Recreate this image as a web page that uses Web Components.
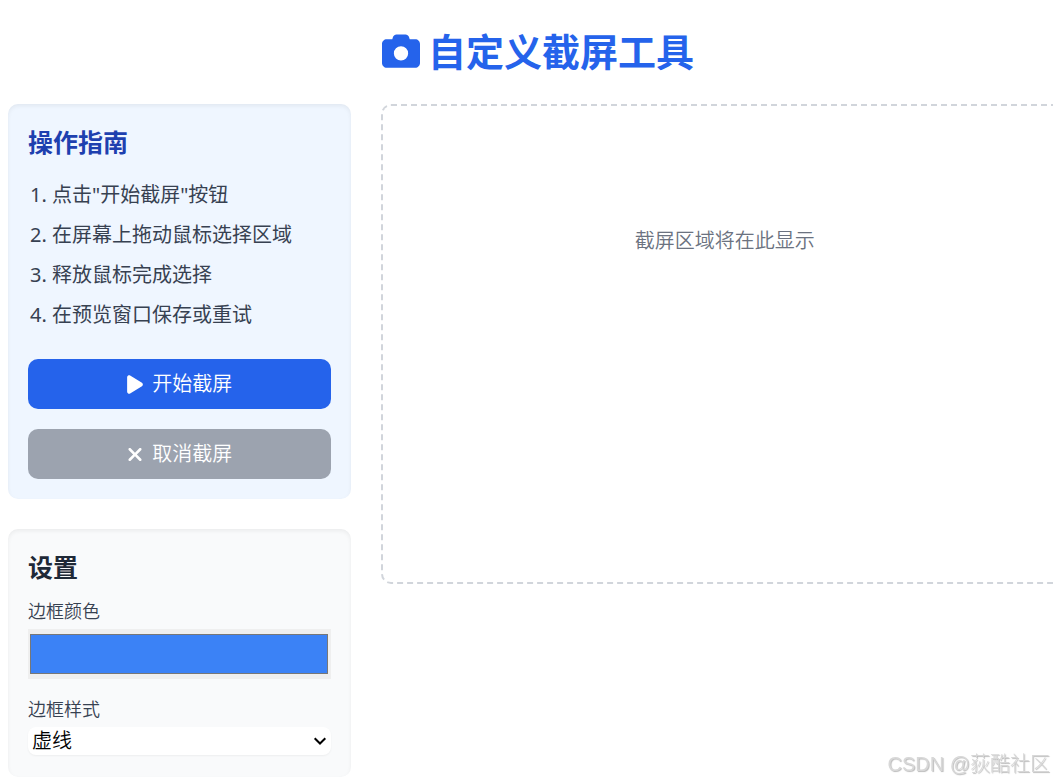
<!DOCTYPE html>
<html lang="zh-CN">
<head>
<meta charset="UTF-8">
<meta name="viewport" content="width=device-width, initial-scale=1">
<title>自定义截屏工具</title>
<style>
  body {
    margin: 0;
    padding: 8px;
    overflow-x: clip;
    background: #fff;
    color: #374151;
    font: 20px/30px "Noto Sans", "Noto Sans CJK SC", sans-serif;
    font-weight: 350;
  }
</style>
</head>
<body>
<capture-app>
  <tool-card slot="side" tone="blue">
    <span slot="title">操作指南</span>
    <step-list></step-list>
    <tool-button icon="play" tone="primary">开始截屏</tool-button>
    <tool-button icon="close">取消截屏</tool-button>
  </tool-card>
  <tool-card slot="side">
    <span slot="title">设置</span>
    <border-settings></border-settings>
  </tool-card>
  <capture-preview>截屏区域将在此显示</capture-preview>
</capture-app>
<water-mark>CSDN @荻酷社区</water-mark>

<script>
  function attach(el, html) {
    const template = document.createElement('template');
    template.innerHTML = html;
    el.attachShadow({mode: 'open'}).appendChild(template.content.cloneNode(true));
  }

  const icons = {
    play: 'M73 39c-14.8-9.1-33.4-9.4-48.5-.9S0 62.6 0 80V432c0 17.4 9.4 33.4 24.5 41.9s33.7 8.1 48.5-.9L361 297c14.3-8.7 23-24.2 23-41s-8.7-32.2-23-41L73 39z',
    close: 'M342.6 150.6c12.5-12.5 12.5-32.8 0-45.3s-32.8-12.5-45.3 0L192 210.7 86.6 105.4c-12.5-12.5-32.8-12.5-45.3 0s-12.5 32.8 0 45.3L146.7 256 41.4 361.4c-12.5 12.5-12.5 32.8 0 45.3s32.8 12.5 45.3 0L192 301.3 297.4 406.6c12.5 12.5 32.8 12.5 45.3 0s12.5-32.8 0-45.3L237.3 256 342.6 150.6z'
  };

  // page: title, side column, preview area (runs past the right edge)
  class CaptureApp extends HTMLElement {
    constructor() {
      super();
      attach(this, `
        <style>
          :host { display: block; margin-right: -23px }
          h1 {
            display: flex; justify-content: center; align-items: center; gap: 8px;
            margin: 15px 0 25px; color: #2563eb; font-size: 38px; line-height: 56px; font-weight: 700;
          }
          h1 svg { width: 38px; height: 38px; fill: currentColor }
          main { display: grid; grid-template-columns: 1fr 2fr; gap: 30px; align-items: start }
          aside { display: grid; gap: 30px }
        </style>
        <h1>
          <svg viewBox="0 0 512 512" aria-hidden="true"><path d="M149.1 64.8L138.7 96H64C28.7 96 0 124.7 0 160V416c0 35.3 28.7 64 64 64H448c35.3 0 64-28.7 64-64V160c0-35.3-28.7-64-64-64H373.3L362.9 64.8C356.4 45.2 338.1 32 317.4 32H194.6c-20.7 0-39 13.2-45.5 32.8zM256 192a96 96 0 1 1 0 192 96 96 0 1 1 0-192z"/></svg>
          <span>自定义截屏工具</span>
        </h1>
        <main>
          <aside><slot name="side"></slot></aside>
          <slot></slot>
        </main>
      `);
    }
  }

  class ToolCard extends HTMLElement {
    constructor() {
      super();
      attach(this, `
        <style>
          :host {
            display: block; padding: 20px; border-radius: 10px;
            background: #f9fafb; color: #1f2937;
            box-shadow: inset 0 2px 4px rgba(0, 0, 0, .06);
          }
          :host([tone=blue]) { background: #eff6ff; color: #1e40af }
          h2 { margin: 0; font-size: 25px; line-height: 36px; font-weight: 700 }
        </style>
        <h2><slot name="title"></slot></h2>
        <slot></slot>
      `);
    }
  }

  class StepList extends HTMLElement {
    constructor() {
      super();
      const steps = ['点击"开始截屏"按钮', '在屏幕上拖动鼠标选择区域', '释放鼠标完成选择', '在预览窗口保存或重试'];
      attach(this, `
        <style>
          :host { display: block; margin: 20px 0 29px; color: #374151; font-weight: 400 }
          ol { display: grid; gap: 10px; margin: 0; padding-left: 24px }
        </style>
        <ol>${steps.map(s => `<li>${s}</li>`).join('')}</ol>
      `);
    }
  }

  class ToolButton extends HTMLElement {
    constructor() {
      super();
      attach(this, `
        <style>
          :host { display: block }
          :host(:not(:last-child)) { margin-bottom: 20px }
          button {
            display: flex; justify-content: center; align-items: center; gap: 9px;
            width: 100%; padding: 10px; border: 0; border-radius: 10px;
            background: #9ca3af; color: #fff; font: inherit; cursor: pointer;
          }
          :host([tone=primary]) button { background: #2563eb }
          svg { width: 16px; height: 21px; fill: currentColor }
        </style>
        <button type="button">
          <svg viewBox="0 0 384 512" aria-hidden="true"><path d="${icons[this.getAttribute('icon')]}"/></svg>
          <span><slot></slot></span>
        </button>
      `);
    }
  }

  class BorderSettings extends HTMLElement {
    constructor() {
      super();
      attach(this, `
        <style>
          :host { display: grid; gap: 18px; margin: 14px 0 2px; color: #374151 }
          .field { display: grid; gap: 6px }
          label { font-size: 18px; line-height: 24px }
          input {
            box-sizing: border-box; width: 100%; height: 50px; padding: 5px 3px 5px 2px;
            border: 0; background: #efefef;
          }
          input::-webkit-color-swatch-wrapper { padding: 0 }
          input::-webkit-color-swatch { border: 1px solid #777 }
          .select { display: grid; align-items: center }
          .select > * { grid-area: 1 / 1 }
          select {
            appearance: none;
            width: 100%; height: 28px; padding: 0 4px; border: 0; border-radius: 8px;
            background: #fff; color: #000; font: inherit; line-height: 28px;
            box-shadow: 0 1px 2px rgba(0, 0, 0, .05);
          }
          svg {
            justify-self: end; width: 14px; height: 10px; margin-right: 4px;
            fill: none; stroke: #000; stroke-width: 2; pointer-events: none;
          }
        </style>
        <div class="field">
          <label for="color">边框颜色</label>
          <input id="color" type="color" value="#3b82f6">
        </div>
        <div class="field">
          <label for="line">边框样式</label>
          <div class="select">
            <select id="line">
              <option>虚线</option>
              <option>实线</option>
              <option>点线</option>
            </select>
            <svg viewBox="0 0 14 10" aria-hidden="true"><path d="M1.7 2.2L7 7.5l5.3-5.3"/></svg>
          </div>
        </div>
      `);
    }
  }

  class CapturePreview extends HTMLElement {
    constructor() {
      super();
      attach(this, `
        <style>
          :host {
            display: block; box-sizing: border-box; min-height: 480px; padding: 120px 20px;
            border: 2px dashed #d1d5db; border-radius: 10px;
            color: #6b7280; text-align: center;
          }
        </style>
        <slot></slot>
      `);
    }
  }

  class WaterMark extends HTMLElement {
    constructor() {
      super();
      attach(this, `
        <style>
          :host {
            position: fixed; right: 3px; bottom: 2px;
            color: #d8d8d8; text-shadow: 1px 1px 1px #bbb; pointer-events: none;
            font-family: "Liberation Sans", "Noto Sans CJK SC", sans-serif; font-weight: 300;
          }
        </style>
        <slot></slot>
      `);
    }
  }

  customElements.define('capture-app', CaptureApp);
  customElements.define('tool-card', ToolCard);
  customElements.define('step-list', StepList);
  customElements.define('tool-button', ToolButton);
  customElements.define('border-settings', BorderSettings);
  customElements.define('capture-preview', CapturePreview);
  customElements.define('water-mark', WaterMark);
</script>
</body>
</html>
